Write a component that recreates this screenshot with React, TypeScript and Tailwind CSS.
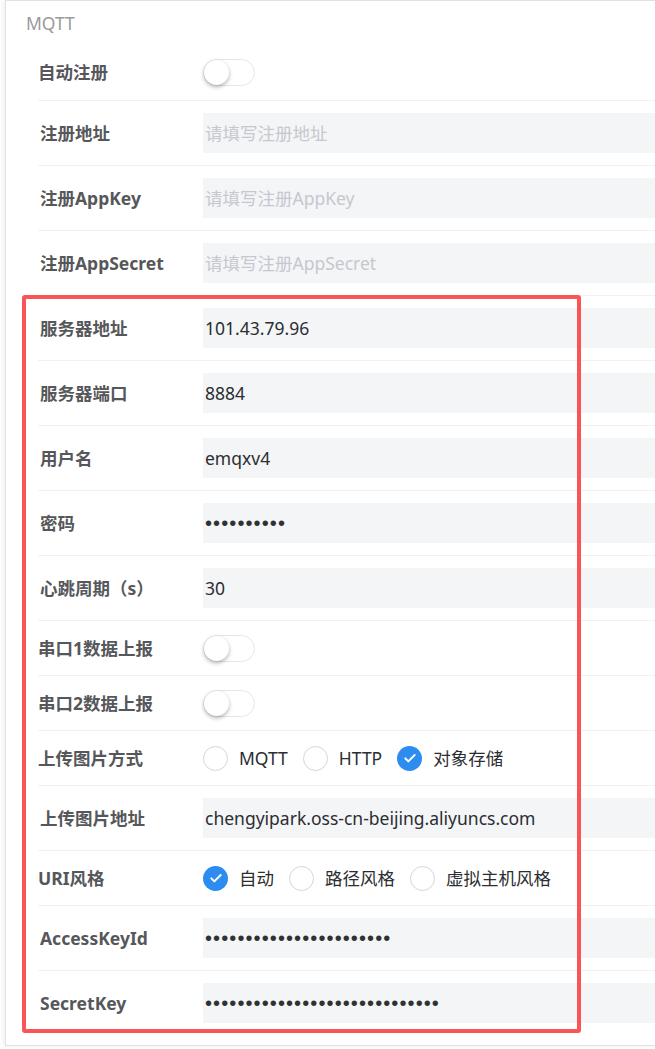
import React from "react";

type RowProps = {
  label: string;
  tall?: boolean;
  first?: boolean;
  inset?: boolean;
  children: React.ReactNode;
};

const Row: React.FC<RowProps> = ({ label, tall, first, inset, children }) => {
  return (
    <div
      className={
        "flex items-center " +
        (tall ? "h-[65px] " : "h-[55px] ") +
        (first ? "" : "border-t border-[#f0f1f3]")
      }
    >
      <div
        className={
          "w-[165px] shrink-0 text-[17.5px] font-bold text-[#56575a] " +
          (inset ? "pl-[2px]" : "")
        }
      >
        {label}
      </div>
      {children}
    </div>
  );
};

const Field: React.FC<{ value?: string; placeholder?: string; dots?: number }> = ({
  value,
  placeholder,
  dots,
}) => {
  return (
    <div className="flex h-[40px] w-[520px] shrink-0 items-center bg-[#f4f5f7] px-[2px] text-[17.5px]">
      {dots ? (
        <span className="font-['Liberation_Sans',sans-serif] text-[20px] tracking-[1.1px] text-[#303133]">
          {"•".repeat(dots)}
        </span>
      ) : value ? (
        <span className="text-[#2b2d31]">{value}</span>
      ) : (
        <span className="text-[#c5c8ce]">{placeholder}</span>
      )}
    </div>
  );
};

const Switch: React.FC = () => {
  return (
    <div className="flex h-[27px] w-[52px] items-center rounded-full border border-[#e6e6e6] bg-white">
      <div className="h-[25px] w-[25px] rounded-full bg-white shadow-[0_2px_4px_rgba(0,0,0,0.3)]" />
    </div>
  );
};

const Radio: React.FC<{ label: string; checked?: boolean }> = ({ label, checked }) => {
  return (
    <div className="mr-[15px] flex items-center">
      {checked ? (
        <div className="flex h-[25px] w-[25px] items-center justify-center rounded-full bg-[#2d8cf0]">
          <svg viewBox="0 0 24 24" className="h-[16px] w-[16px]">
            <path d="M5 12.5l4.5 4.5L19 7.5" fill="none" stroke="#fff" strokeWidth="3" strokeLinecap="round" strokeLinejoin="round" />
          </svg>
        </div>
      ) : (
        <div className="h-[25px] w-[25px] rounded-full border border-[#d4d6da] bg-white" />
      )}
      <span className="ml-[11px] text-[17.5px] text-[#2b2d31]">{label}</span>
    </div>
  );
};

export default function App() {
  return (
    <div className="h-[1049px] w-[655px] overflow-hidden bg-white font-['Noto_Sans','Noto_Sans_CJK_SC',sans-serif]">
      <div className="ml-[5px] h-[1046px] w-[720px] border border-[#e2e2e2] bg-white shadow-[-2px_0_4px_rgba(0,0,0,0.06)]">
        <div className="flex h-[44px] items-center pl-[20px] text-[17.5px] text-[#9a9a9a]">MQTT</div>
        <div className="ml-[32px]">
          <Row label="自动注册" first>
            <Switch />
          </Row>
          <Row label="注册地址" tall inset>
            <Field placeholder="请填写注册地址" />
          </Row>
          <Row label="注册AppKey" tall inset>
            <Field placeholder="请填写注册AppKey" />
          </Row>
          <Row label="注册AppSecret" tall inset>
            <Field placeholder="请填写注册AppSecret" />
          </Row>
          <div className="relative">
            <Row label="服务器地址" tall inset>
              <Field value="101.43.79.96" />
            </Row>
            <Row label="服务器端口" tall inset>
              <Field value="8884" />
            </Row>
            <Row label="用户名" tall inset>
              <Field value="emqxv4" />
            </Row>
            <Row label="密码" tall inset>
              <Field dots={10} />
            </Row>
            <Row label="心跳周期（s）" tall inset>
              <Field value="30" />
            </Row>
            <Row label="串口1数据上报">
              <Switch />
            </Row>
            <Row label="串口2数据上报">
              <Switch />
            </Row>
            <Row label="上传图片方式">
              <Radio label="MQTT" />
              <Radio label="HTTP" />
              <Radio label="对象存储" checked />
            </Row>
            <Row label="上传图片地址" tall inset>
              <Field value="chengyipark.oss-cn-beijing.aliyuncs.com" />
            </Row>
            <Row label="URI风格">
              <Radio label="自动" checked />
              <Radio label="路径风格" />
              <Radio label="虚拟主机风格" />
            </Row>
            <Row label="AccessKeyId" tall inset>
              <Field dots={23} />
            </Row>
            <Row label="SecretKey" tall inset>
              <Field dots={29} />
            </Row>
            <div className="pointer-events-none absolute -left-[16px] top-0 bottom-[2px] w-[559px] rounded-[3px] border-[4px] border-[#f95556]" />
          </div>
        </div>
      </div>
    </div>
  );
}
